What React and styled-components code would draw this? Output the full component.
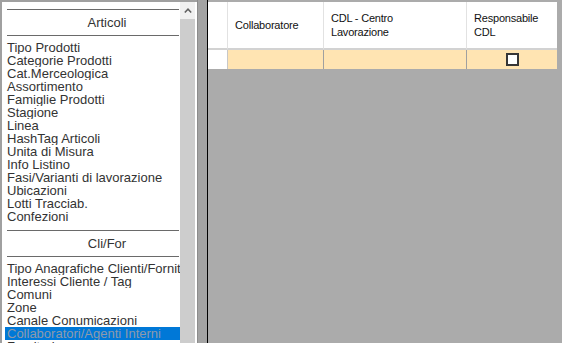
import React from 'react';
import styled, { createGlobalStyle } from 'styled-components';

const Global = createGlobalStyle`
  html, body { margin: 0; padding: 0; }
  body {
    width: 562px; height: 343px; overflow: hidden;
    background: #a0a0a0;
    font-family: "Liberation Sans", Arial, sans-serif;
  }
`;

const Window = styled.div`
  display: flex;
  width: 562px;
  height: 343px;
  overflow: hidden;
  background: #a0a0a0;
`;

const LeftPanel = styled.div`
  flex: none;
  display: flex;
  width: 195px;
  height: 341px;
  margin: 2px 0 0 2px;
  padding-right: 2px;
  box-sizing: border-box;
  background: #fff;
  overflow: hidden;
`;

const List = styled.div`
  width: 178px;
  flex: none;
  display: flex;
  flex-direction: column;
  padding-top: 7px;
  overflow: hidden;
`;

const Section = styled.div`
  display: flex;
  flex-direction: column;
`;

const Rule = styled.div`
  height: 1px;
  margin: 0 0 0 5px;
  width: 172px;
  background: #6a6a6a;
`;

const SectionHeader = styled.div`
  height: 25px;
  margin-left: 5px;
  width: 172px;
  padding-left: 28px;
  box-sizing: border-box;
  display: flex;
  align-items: center;
  justify-content: center;
  font-size: 13px;
  color: #333;
`;

const Items = styled.div`
  display: flex;
  flex-direction: column;
  margin: 5px 0 7px 0;
`;

const Item = styled.div`
  height: 13px;
  line-height: 13px;
  margin-left: 3px;
  width: 174px;
  padding-left: 2px;
  font-size: 13px;
  white-space: nowrap;
  overflow: hidden;
  color: ${p => (p.$selected ? '#8d9aab' : '#333')};
  background: ${p => (p.$selected ? '#0078d7' : 'transparent')};
`;

const Scrollbar = styled.div`
  width: 15px;
  flex: none;
  display: flex;
  flex-direction: column;
  background: #cdcdcd;
`;

const ScrollButton = styled.div`
  height: 17px;
  background: #f0f0f0;
  display: flex;
  align-items: center;
  justify-content: center;
`;

const Splitter = styled.div`
  width: 9px;
  flex: none;
  border-left: 1px solid #8c8c8c;
  background: #a3a3a3;
`;

const RightPanel = styled.div`
  flex: 1;
  border-left: 1px solid #000;
  background: #ababab;
  padding-top: 2px;
`;

const Grid = styled.div`
  display: grid;
  grid-template-columns: 20px 96px 143px 90px;
  grid-template-rows: 48px 19px;
  width: 349px;
`;

const HeadCell = styled.div`
  background: #fff;
  border-right: ${p => (p.$last ? 'none' : '1px solid #e2e2e2')};
  border-bottom: 2px solid #d2d2d2;
  display: flex;
  align-items: center;
  padding-left: 7px;
  font-size: 11px;
  letter-spacing: -0.2px;
  line-height: 14px;
  color: #111;
`;

const CornerCell = styled.div`
  background: #fff;
  border-right: 1px solid #e2e2e2;
  border-bottom: 2px solid #d2d2d2;
`;

const RowHeadCell = styled.div`
  background: #fff;
  border-right: 1px solid #c8c8c8;
`;

const DataCell = styled.div`
  background: #ffe4b2;
  border-right: ${p => (p.$last ? 'none' : '1px solid #a0a0a0')};
  display: flex;
  align-items: center;
  justify-content: center;
`;

const CheckBox = styled.div`
  width: 13px;
  height: 13px;
  box-sizing: border-box;
  border: 2px solid #363636;
  background: #fff;
  margin-left: 1px;
`;

const sections = [
  {
    title: 'Articoli',
    items: [
      'Tipo Prodotti', 'Categorie Prodotti', 'Cat.Merceologica', 'Assortimento',
      'Famiglie Prodotti', 'Stagione', 'Linea', 'HashTag Articoli', 'Unita di Misura',
      'Info Listino', 'Fasi/Varianti di lavorazione', 'Ubicazioni', 'Lotti Tracciab.',
      'Confezioni',
    ],
  },
  {
    title: 'Cli/For',
    items: [
      'Tipo Anagrafiche Clienti/Fornitori', 'Interessi Cliente / Tag', 'Comuni', 'Zone',
      'Canale Conumicazioni', 'Collaboratori/Agenti Interni', 'Fornitori',
    ],
  },
];

const SELECTED = 'Collaboratori/Agenti Interni';

export default function App() {
  return (
    <>
      <Global />
      <Window>
        <LeftPanel>
          <List>
            {sections.map(s => (
              <Section key={s.title}>
                <Rule />
                <SectionHeader>{s.title}</SectionHeader>
                <Rule />
                <Items>
                  {s.items.map(it => (
                    <Item key={it} $selected={it === SELECTED}>{it}</Item>
                  ))}
                </Items>
              </Section>
            ))}
          </List>
          <Scrollbar>
            <ScrollButton>
              <svg width="8" height="5" viewBox="0 0 8 5">
                <polyline points="0.8,4.5 4,1.2 7.2,4.5" fill="none" stroke="#606060" strokeWidth="1.5" />
              </svg>
            </ScrollButton>
          </Scrollbar>
        </LeftPanel>
        <Splitter />
        <RightPanel>
          <Grid>
            <CornerCell />
            <HeadCell>Collaboratore</HeadCell>
            <HeadCell>CDL - Centro<br />Lavorazione</HeadCell>
            <HeadCell $last>Responsabile<br />CDL</HeadCell>
            <RowHeadCell />
            <DataCell />
            <DataCell />
            <DataCell $last><CheckBox /></DataCell>
          </Grid>
        </RightPanel>
      </Window>
    </>
  );
}
